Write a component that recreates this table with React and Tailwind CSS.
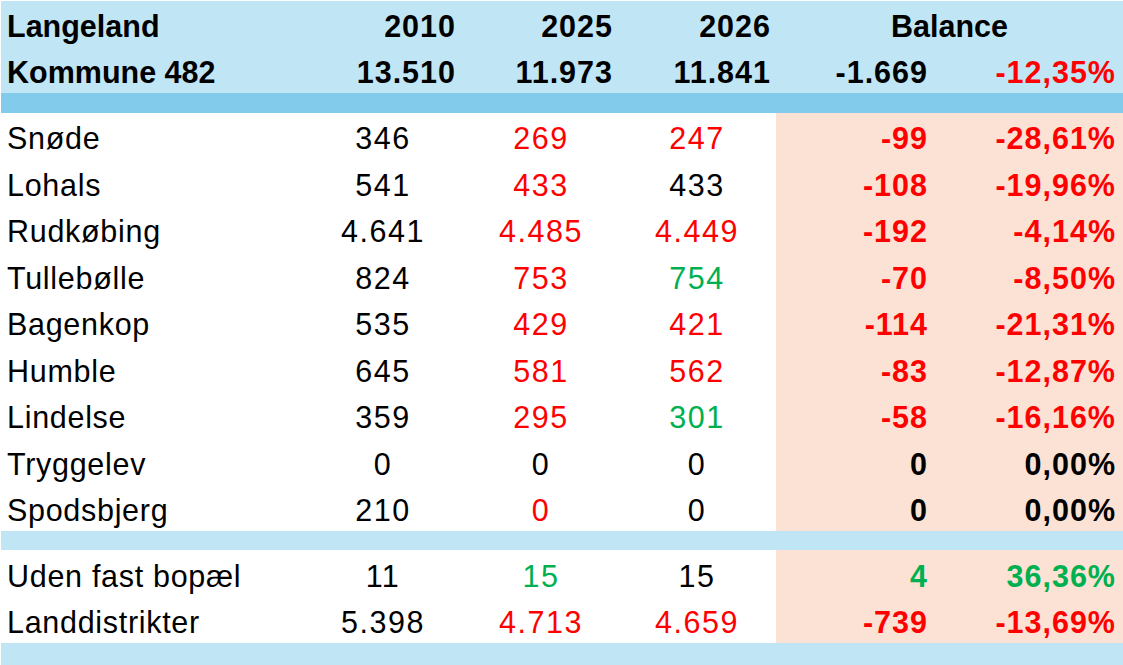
import React from 'react'

const RED = 'text-[#ff0000]'
const GREEN = 'text-[#00b050]'
const BLACK = 'text-black'

const towns = [
  ['Snøde', '346', ['269', RED], ['247', RED], '-99', '-28,61%', RED],
  ['Lohals', '541', ['433', RED], ['433', BLACK], '-108', '-19,96%', RED],
  ['Rudkøbing', '4.641', ['4.485', RED], ['4.449', RED], '-192', '-4,14%', RED],
  ['Tullebølle', '824', ['753', RED], ['754', GREEN], '-70', '-8,50%', RED],
  ['Bagenkop', '535', ['429', RED], ['421', RED], '-114', '-21,31%', RED],
  ['Humble', '645', ['581', RED], ['562', RED], '-83', '-12,87%', RED],
  ['Lindelse', '359', ['295', RED], ['301', GREEN], '-58', '-16,16%', RED],
  ['Tryggelev', '0', ['0', BLACK], ['0', BLACK], '0', '0,00%', BLACK],
  ['Spodsbjerg', '210', ['0', RED], ['0', BLACK], '0', '0,00%', BLACK],
]

const extra = [
  ['Uden fast bopæl', '11', ['15', GREEN], ['15', BLACK], '4', '36,36%', GREEN],
  ['Landdistrikter', '5.398', ['4.713', RED], ['4.659', RED], '-739', '-13,69%', RED],
]

const cols = 'grid grid-cols-[307px_150px_157px_161px_154px_193px]'

function Row({ row }) {
  const [name, y2010, [y2025, c25], [y2026, c26], diff, pct, bal] = row
  return (
    <div className={`${cols} items-center`}>
      <div className="pl-[6px] pt-[5px] tracking-[0.7px]">{name}</div>
      <div className="text-center pt-[5px] tracking-[1.5px]">{y2010}</div>
      <div className={`text-center pl-[9px] pt-[5px] tracking-[1.5px] ${c25}`}>{y2025}</div>
      <div className={`text-center pl-[3px] pt-[5px] tracking-[1.5px] ${c26}`}>{y2026}</div>
      <div className={`h-full flex items-center justify-end pr-[2px] pt-[5px] bg-[#fbe2d5] font-bold tracking-[1px] ${bal}`}>{diff}</div>
      <div className={`h-full flex items-center justify-end pr-[7px] pt-[5px] bg-[#fbe2d5] font-bold tracking-[1px] ${bal}`}>{pct}</div>
    </div>
  )
}

export default function App() {
  return (
    <div className="w-[1123px] h-[665px] overflow-hidden bg-white pt-px pl-px text-black text-[30.5px] leading-none font-['Liberation_Sans',Arial,sans-serif]">
      <div className="bg-[#c0e6f5] font-bold">
        <div className={`${cols} h-[46px] items-center pt-[4px]`}>
          <div className="pl-[6px]">Langeland</div>
          <div className="text-right pr-[2px] tracking-[1px]">2010</div>
          <div className="text-right pr-[2px] tracking-[1px]">2025</div>
          <div className="text-right pr-[5px] tracking-[1px]">2026</div>
          <div className="col-span-2 text-center">Balance</div>
        </div>
        <div className={`${cols} h-[46px] items-center pt-[5px]`}>
          <div className="pl-[6px]">Kommune 482</div>
          <div className="text-right pr-[2px] tracking-[1px]">13.510</div>
          <div className="text-right pr-[2px] tracking-[1px]">11.973</div>
          <div className="text-right pr-[5px] tracking-[1px]">11.841</div>
          <div className="text-right pr-[2px] tracking-[1px]">-1.669</div>
          <div className={`text-right pr-[7px] tracking-[1px] ${RED}`}>-12,35%</div>
        </div>
      </div>
      <div className="h-[20px] bg-[#83cbeb]" />
      <div className="grid grid-rows-9 h-[418px]">
        {towns.map((r) => <Row key={r[0]} row={r} />)}
      </div>
      <div className="h-[19px] bg-[#c0e6f5]" />
      <div className="grid grid-rows-2 h-[93px]">
        {extra.map((r) => <Row key={r[0]} row={r} />)}
      </div>
      <div className="h-[22px] bg-[#c0e6f5]" />
    </div>
  )
}
